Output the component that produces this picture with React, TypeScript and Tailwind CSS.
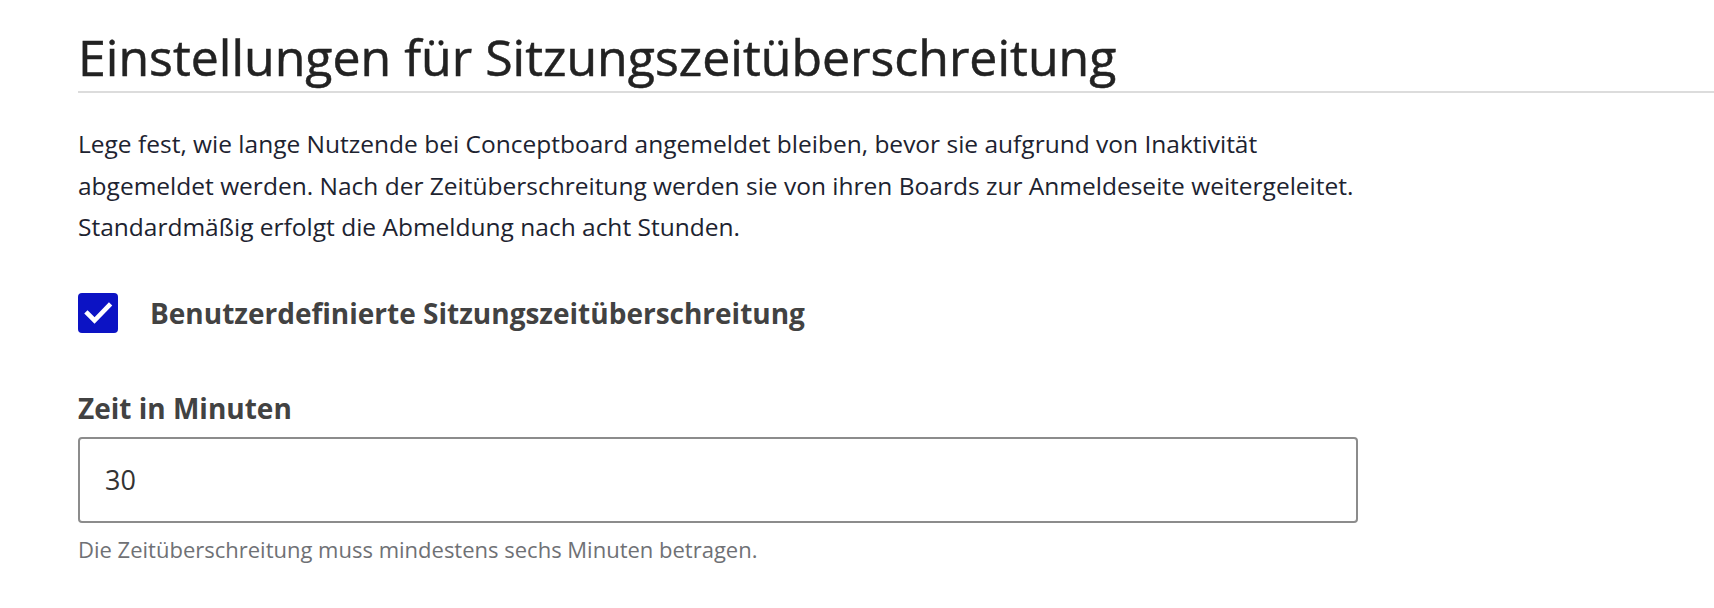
function Checkbox({ checked }: { checked: boolean }) {
  return (
    <span className="flex h-10 w-10 shrink-0 items-center justify-center rounded-[4px] bg-[#0c13c4]">
      {checked && (
        <svg viewBox="0 0 40 40" className="h-10 w-10">
          <polyline
            points="9.5,20.5 16.5,27.5 31,12.5"
            fill="none"
            stroke="#ffffff"
            strokeWidth="4.6"
            strokeLinecap="square"
          />
        </svg>
      )}
    </span>
  );
}

export default function App() {
  return (
    <div className="min-h-screen bg-white pl-[78px] font-['Open_Sans',sans-serif]">
      <h1 className="mt-[27px] border-b-2 border-[#dcdcdc] pb-1 text-[50px] leading-[60px] font-normal text-[#222222] [-webkit-text-stroke:0.5px_#222222]">
        Einstellungen für Sitzungszeitüberschreitung
      </h1>

      <div className="w-[1280px]">
        <p className="mt-[30px] w-[1290px] text-[24.5px] leading-[41.6px] text-[#1d2330]">
          Lege fest, wie lange Nutzende bei Conceptboard angemeldet bleiben, bevor sie aufgrund von
          Inaktivität abgemeldet werden. Nach der Zeitüberschreitung werden sie von ihren Boards zur
          Anmeldeseite weitergeleitet. Standardmäßig erfolgt die Abmeldung nach acht Stunden.
        </p>

        <label className="mt-[45px] flex items-center gap-8">
          <Checkbox checked />
          <span className="text-[28px] leading-[40px] font-bold text-[#424242]">
            Benutzerdefinierte Sitzungszeitüberschreitung
          </span>
        </label>

        <div className="mt-[59px]">
          <div className="text-[28px] leading-[32px] font-bold text-[#424242]">Zeit in Minuten</div>
          <input
            type="text"
            defaultValue="30"
            className="mt-[13px] block h-[86px] w-full rounded-[4px] border-2 border-[#8c8c8c] px-[25px] text-[27px] text-[#333333] outline-none"
          />
          <p className="mt-[11px] text-[22px] leading-[30px] text-[#6f7175]">
            Die Zeitüberschreitung muss mindestens sechs Minuten betragen.
          </p>
        </div>
      </div>
    </div>
  );
}
